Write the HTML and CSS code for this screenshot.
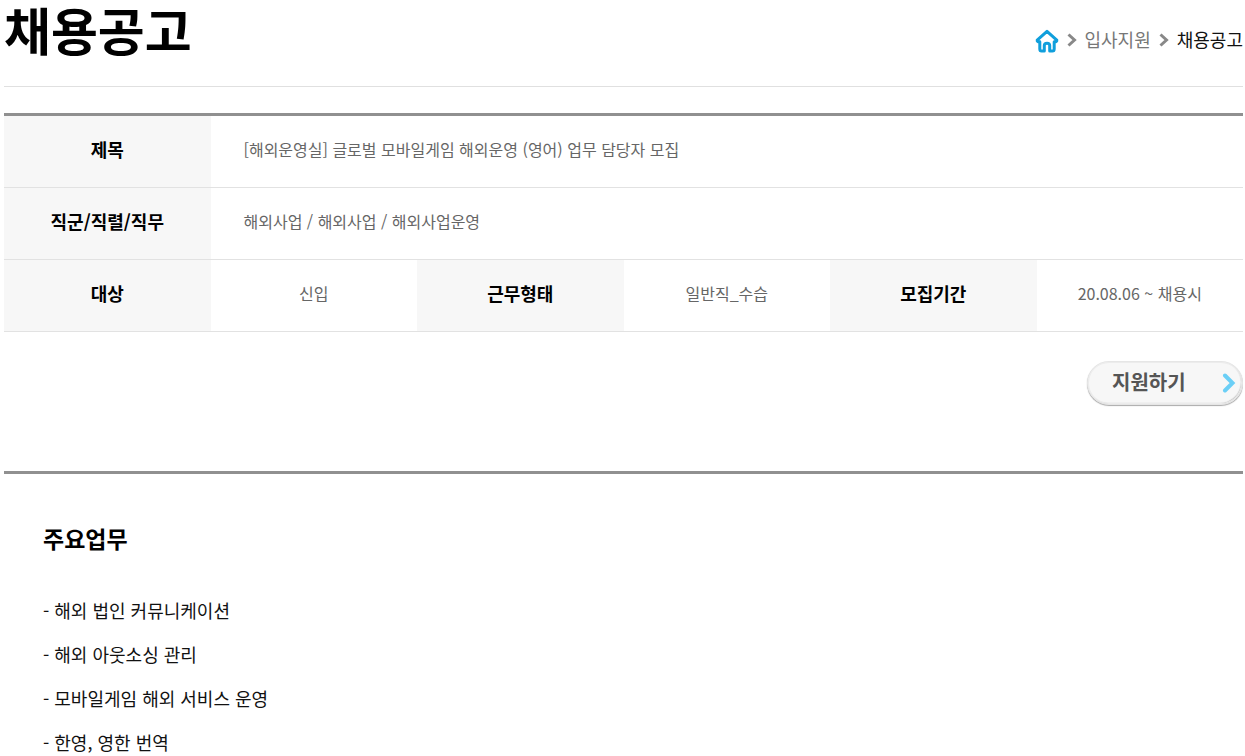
FILE: index.html
```html
<!DOCTYPE html>
<html lang="ko">
<head>
	<meta charset="UTF-8">
	<meta name="viewport" content="width=device-width, initial-scale=1.0">
	<title>채용공고</title>
	<link rel="stylesheet" href="styles.css">
</head>
<body>
	<header class="page-header">
		<h1>채용공고</h1>
		<nav class="breadcrumb" aria-label="현재 위치">
			<a class="home" href="#" aria-label="홈">
				<svg width="24" height="24" viewBox="0 0 24 24">
					<path d="M12 2.4 L2.2 11.2 Q1.8 13 4.8 12.8 V20 Q4.8 22 6.6 22 H9.3 V16.6 Q9.3 14.2 12 14.2 Q14.7 14.2 14.7 16.6 V22 H17.4 Q19.2 22 19.2 20 V12.8 Q22.2 13 21.8 11.2 Z"/>
				</svg>
			</a>
			<svg class="arrow" width="10" height="14" viewBox="0 0 10 14"><path d="M1.5 1.5 L7.5 7 L1.5 12.5"/></svg>
			<a href="#">입사지원</a>
			<svg class="arrow" width="10" height="14" viewBox="0 0 10 14"><path d="M1.5 1.5 L7.5 7 L1.5 12.5"/></svg>
			<a class="current" href="#" aria-current="page">채용공고</a>
		</nav>
	</header>

	<main>
		<table class="info">
			<tbody>
				<tr>
					<th scope="row">제목</th>
					<td class="wide" colspan="5">[해외운영실] 글로벌 모바일게임 해외운영 (영어) 업무 담당자 모집</td>
				</tr>
				<tr>
					<th scope="row">직군/직렬/직무</th>
					<td class="wide" colspan="5">해외사업 / 해외사업 / 해외사업운영</td>
				</tr>
				<tr>
					<th scope="row">대상</th>
					<td>신입</td>
					<th scope="row">근무형태</th>
					<td>일반직_수습</td>
					<th scope="row">모집기간</th>
					<td>20.08.06 ~ 채용시</td>
				</tr>
			</tbody>
		</table>

		<div class="actions">
			<button class="apply" type="button">
				<span>지원하기</span>
				<svg width="14" height="20" viewBox="0 0 14 20"><path d="M3 2.5 L10.5 10 L3 17.5"/></svg>
			</button>
		</div>

		<section class="detail">
			<h2>주요업무</h2>
			<ul>
				<li>- 해외 법인 커뮤니케이션</li>
				<li>- 해외 아웃소싱 관리</li>
				<li>- 모바일게임 해외 서비스 운영</li>
				<li>- 한영, 영한 번역</li>
			</ul>
		</section>
	</main>
</body>
</html>
```
FILE: styles.css
```css
*, *:before, *:after {
	box-sizing: border-box;
}
body {
	margin: 0 2px 0 4px;
	background: #fff;
	color: #111;
	font-family: "Noto Sans CJK KR", sans-serif;
	font-size: 18px;
}
a {
	color: inherit;
	text-decoration: none;
}

.page-header {
	display: flex;
	justify-content: space-between;
	height: 87px;
	border-bottom: 1px solid #e0e0e0;
}
h1 {
	margin: 0;
	color: #000;
	font-size: 51px;
	line-height: 58px;
	font-weight: 700;
}
.breadcrumb {
	display: flex;
	align-items: center;
	gap: 8px;
	height: 80px;
	color: #777;
}
.breadcrumb a {
	padding-bottom: 2px;
}
.breadcrumb .current {
	color: #111;
}
.breadcrumb .home {
	padding: 2px 0 0;
}
.home svg {
	display: block;
}
.home path {
	fill: none;
	stroke: #109fdc;
	stroke-width: 3;
	stroke-linejoin: round;
}
.arrow path {
	fill: none;
	stroke: #888;
	stroke-width: 3;
}

.info {
	width: 100%;
	margin-top: 26px;
	border-top: 3px solid #909090;
	border-spacing: 0;
	table-layout: fixed;
}
.info th,
.info td {
	height: 72px;
	padding: 0 0 6px;
	border-bottom: 1px solid #e2e2e2;
	text-align: center;
}
.info th {
	background: #f7f7f7;
	color: #000;
	font-weight: 700;
}
.info td {
	color: #666;
	font-size: 16px;
}
.info .wide {
	padding-left: 33px;
	text-align: left;
}

.actions {
	display: flex;
	justify-content: flex-end;
	padding: 29px 0 66px;
}
.apply {
	display: flex;
	align-items: center;
	justify-content: space-between;
	width: 156px;
	height: 44px;
	padding: 0 6px 0 24px;
	border: 1px solid #e6e6e6;
	border-radius: 22px;
	background: #f7f7f7;
	box-shadow: inset 0 0 0 1px #ececec, inset -1px -1px 1px #bbb, 0 1px 1px #aaa;
	color: #555;
	font-family: inherit;
	font-size: 20px;
	font-weight: 700;
	cursor: pointer;
}
.apply span {
	padding-bottom: 4px;
}
.apply path {
	fill: none;
	stroke: #6bcff6;
	stroke-width: 4;
	stroke-linecap: round;
}

.detail {
	padding: 47px 39px 0;
	border-top: 3px solid #909090;
}
h2 {
	margin: 0 0 33px;
	color: #000;
	font-size: 23px;
	line-height: 34px;
	font-weight: 700;
}
.detail ul {
	margin: 0;
	padding: 0;
	list-style: none;
}
.detail li {
	line-height: 44px;
}
```
